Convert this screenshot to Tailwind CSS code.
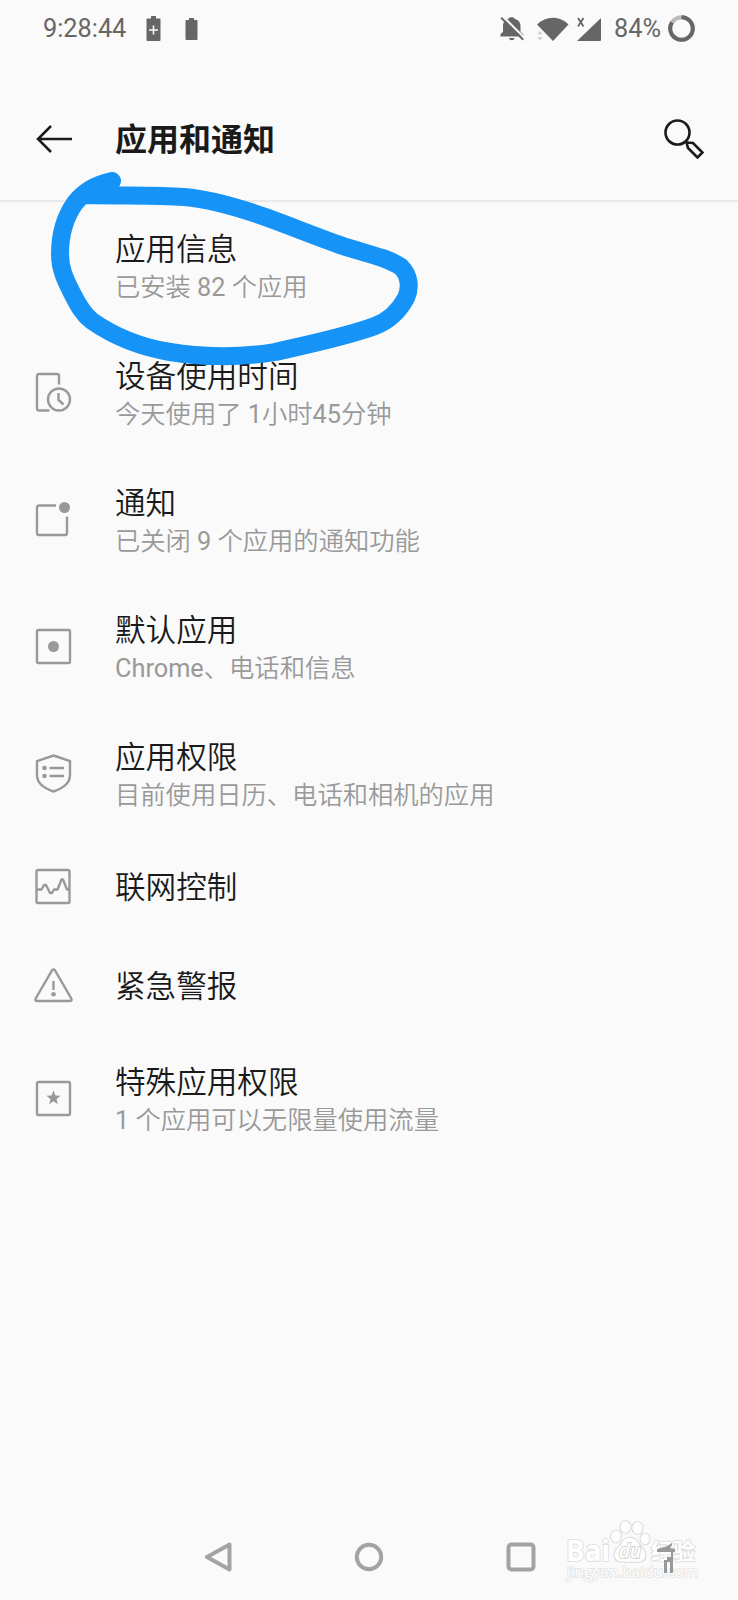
<!DOCTYPE html>
<html lang="zh-CN">
<head>
  <meta charset="UTF-8">
  <meta name="viewport" content="width=device-width, initial-scale=1.0">
  <title>应用和通知</title>
  <script src="https://cdn.jsdelivr.net/npm/@tailwindcss/browser@4"></script>
</head>
<body class="bg-[#fafafa]">
  <div class="relative flex h-[1600px] w-[738px] flex-col overflow-hidden bg-[#fafafa] font-[Roboto,'Noto_Sans_CJK_SC',sans-serif] text-[#1a1a1a]">

    <!-- Status bar -->
    <div class="flex h-14 shrink-0 items-center pl-[43px] pr-[43px] pt-px text-[25.300px] text-[#666]">
      <span class="pt-px leading-none">9:28:44</span>
      <svg class="ml-[20px] h-[26px] w-[15px]" viewBox="0 0 15 26">
        <path fill="#666" d="M5 0h5v2.500h3.500q1 0 1 1V24q0 1-1 1h-12q-1 0-1-1V3.500q0-1 1-1H5z"/>
        <path stroke="#fafafa" stroke-width="1.600" d="M7.500 9.500v9M3 14h9"/>
      </svg>
      <svg class="ml-6 h-[24px] w-[13px]" viewBox="0 0 13 24">
        <path fill="#666" d="M4 1h5v2h2.500q1 0 1 1v18q0 1-1 1h-10q-1 0-1-1V4q0-1 1-1H4z"/>
      </svg>
      <div class="ml-auto flex items-center">
        <svg class="h-[26px] w-6" viewBox="0 0 24 26">
          <path fill="#666" d="M.500 20.500v-2.500l2.500-2V10c0-4 2.500-6.500 5.500-7.300C9 .8 14 .8 14.500 2.700 18 3.500 20.500 6 20.500 10v6l3 2.500v2zM9 22h5.500c-.5 3-5 3-5.500 0z"/>
          <path stroke="#fafafa" stroke-width="2" d="M3 .500L25.500 23"/>
          <path stroke="#666" stroke-width="2" d="M1.200 1.800l22 22"/>
        </svg>
        <svg class="ml-[13px] h-[26px] w-8" viewBox="0 0 32 26">
          <path fill="#666" d="M0 8.500C9-.500 23-.500 31.500 8.500L16 25z"/>
          <path fill="#ccc" stroke="#fafafa" stroke-width=".6" d="M0 18.500l3-4 3 4zM0 21h6l-3 4z"/>
        </svg>
        <svg class="ml-2 h-[26px] w-6" viewBox="0 0 24 26">
          <path fill="#666" d="M24 2v22q0 1-1 1H0z"/>
          <path fill="none" stroke="#666" stroke-width="1.800" d="M1 2l5.500 8.500M6.500 2L1 10.500"/>
        </svg>
        <span class="ml-[13px] pt-px leading-none">84%</span>
        <svg class="ml-[7px] h-[28px] w-[27px]" viewBox="0 0 27 28">
          <circle cx="13.500" cy="13.500" r="11.300" fill="none" stroke="#bbb" stroke-width="4"/>
          <path fill="none" stroke="#666" stroke-width="4" d="M13.500 2.200A11.300 11.300 0 1 1 4 7.400"/>
        </svg>
      </div>
    </div>

    <!-- Title bar -->
    <header class="flex h-[146px] shrink-0 items-center border-b-2 border-[#e9e9e9] pl-[36px] pr-[34px] pt-[22px]">
      <svg class="h-[28px] w-[37px]" viewBox="0 0 37 28" fill="none" stroke="#1a1a1a" stroke-width="2.500">
        <path d="M36 14H2M15 1L2 14l13 13"/>
      </svg>
      <h1 class="ml-[42px] pt-[2px] text-[32px] font-bold leading-[40px]">应用和通知</h1>
      <svg class="ml-auto h-10 w-10" viewBox="0 0 40 40" fill="none" stroke="#1a1a1a" stroke-width="2.600">
        <circle cx="13.500" cy="13.500" r="12"/>
        <path d="M22.500 23.500l6.500.5 9.500 9.500-5 5L24 29z"/>
      </svg>
    </header>

    <!-- Settings list -->
    <ul class="grow font-[350]">
      <li class="flex h-[127px] pl-[33px]">
        <div class="w-10"></div>
        <div class="ml-[42px] pt-[28px]">
          <p class="text-[30.600px] leading-[40px]">应用信息</p>
          <p class="text-[25.300px] leading-[36px] text-[#999]">已安装 <span class="font-normal">82</span> 个应用</p>
        </div>
      </li>

      <li class="flex h-[127px] pl-[33px]">
        <svg class="mt-[43px] h-10 w-10" viewBox="0 0 40 40" fill="none" stroke="#999" stroke-width="2.400">
          <path d="M16.500 38.500H6q-2 0-2-2V4q0-2 2-2h18q2 0 2 2v8.500"/>
          <circle cx="26" cy="27.500" r="11"/>
          <path d="M25.500 21v7l5 4.500"/>
        </svg>
        <div class="ml-[42px] pt-[28px]">
          <p class="text-[30.600px] leading-[40px]">设备使用时间</p>
          <p class="text-[25.300px] leading-[36px] text-[#999]">今天使用了 <span class="font-normal">1</span>小时<span class="font-normal">45</span>分钟</p>
        </div>
      </li>

      <li class="flex h-[127px] pl-[33px]">
        <svg class="mt-[43px] h-10 w-10" viewBox="0 0 40 40" fill="none" stroke="#999" stroke-width="2.400">
          <path d="M23 6.500H6q-2 0-2 2V34q0 2 2 2h26q2 0 2-2V17.500"/>
          <circle cx="31.500" cy="8.500" r="5.500" fill="#999" stroke="none"/>
        </svg>
        <div class="ml-[42px] pt-[28px]">
          <p class="text-[30.600px] leading-[40px]">通知</p>
          <p class="text-[25.300px] leading-[36px] text-[#999]">已关闭 <span class="font-normal">9</span> 个应用的通知功能</p>
        </div>
      </li>

      <li class="flex h-[127px] pl-[33px]">
        <svg class="mt-[43px] h-10 w-10" viewBox="0 0 40 40" fill="none" stroke="#999" stroke-width="2.400">
          <rect x="4" y="4" width="33" height="33" rx="1.500"/>
          <circle cx="20.500" cy="20.500" r="5.500" fill="#999" stroke="none"/>
        </svg>
        <div class="ml-[42px] pt-[28px]">
          <p class="text-[30.600px] leading-[40px]">默认应用</p>
          <p class="text-[25.300px] leading-[36px] text-[#999]"><span class="font-normal">Chrome</span>、电话和信息</p>
        </div>
      </li>

      <li class="flex h-[127px] pl-[33px]">
        <svg class="mt-[43px] h-10 w-10" viewBox="0 0 40 40" fill="none" stroke="#999" stroke-width="2.400">
          <path d="M20.500 2.500L37 8v14c0 8-6 13-16.500 16.500C10 35 4 30 4 22V8z"/>
          <path stroke-width="2.600" d="M16.500 15H31M16.500 23H31"/>
          <circle cx="11.500" cy="15" r="2.300" fill="#999" stroke="none"/>
          <circle cx="11.500" cy="23" r="2.300" fill="#999" stroke="none"/>
        </svg>
        <div class="ml-[42px] pt-[28px]">
          <p class="text-[30.600px] leading-[40px]">应用权限</p>
          <p class="text-[25.300px] leading-[36px] text-[#999]">目前使用日历、电话和相机的应用</p>
        </div>
      </li>

      <li class="flex h-[99px] items-center pl-[33px]">
        <svg class="h-10 w-10" viewBox="0 0 40 40" fill="none" stroke="#999" stroke-width="2.400">
          <rect x="3.500" y="3" width="33" height="33" rx="1.500"/>
          <path stroke-linejoin="round" d="M4 22.500h4.500l2.500-4.500h2l4 8h2l2-3.500h3.500l4-10h1.500l4 10H36"/>
        </svg>
        <p class="ml-[42px] pt-[3px] text-[30.600px] leading-[40px]">联网控制</p>
      </li>

      <li class="flex h-[99px] items-center pl-[33px]">
        <svg class="h-10 w-10" viewBox="0 0 40 40" fill="none" stroke="#999" stroke-width="2.400">
          <path d="M19 4.500q1.500-2 3 0L38.300 32.500q1 2.500-1.500 2.500H4.200q-2.500 0-1.500-2.500z"/>
          <path d="M20.500 15v9"/>
          <circle cx="20.500" cy="28.300" r="2.300" fill="#999" stroke="none"/>
        </svg>
        <p class="ml-[42px] pt-[3px] text-[30.600px] leading-[40px]">紧急警报</p>
      </li>

      <li class="flex h-[127px] pl-[33px]">
        <svg class="mt-[43px] h-10 w-10" viewBox="0 0 40 40" fill="none" stroke="#999" stroke-width="2.400">
          <rect x="4" y="4" width="33" height="33" rx="1.500"/>
          <path fill="#999" stroke="none" d="M20.500 12.500l2 5 5 .3-4 3.400 1.400 5.100-4.400-3-4.400 3 1.400-5.100-4-3.400 5-.3z"/>
        </svg>
        <div class="ml-[42px] pt-[28px]">
          <p class="text-[30.600px] leading-[40px]">特殊应用权限</p>
          <p class="text-[25.300px] leading-[36px] text-[#999]"><span class="font-normal">1</span> 个应用可以无限量使用流量</p>
        </div>
      </li>
    </ul>

    <!-- Navigation bar -->
    <nav class="flex h-[86px] shrink-0 items-center pl-[204px]">
      <svg class="h-[30px] w-[30px]" viewBox="0 0 30 30" fill="none" stroke="#a3a3a3" stroke-width="4" stroke-linejoin="round">
        <path d="M3 15L25.500 2.500v25z"/>
      </svg>
      <svg class="ml-[120px] h-[30px] w-[30px]" viewBox="0 0 30 30" fill="none" stroke="#a3a3a3" stroke-width="4">
        <circle cx="15" cy="15" r="12.200"/>
      </svg>
      <svg class="ml-[122px] h-[30px] w-[30px]" viewBox="0 0 30 30" fill="none" stroke="#a3a3a3" stroke-width="4">
        <rect x="2.500" y="2.500" width="25" height="25" rx="3"/>
      </svg>
    </nav>

    <!-- Baidu watermark -->
    <svg class="absolute left-[550px] top-[1510px] h-[90px] w-[188px]" viewBox="0 0 188 90">
      <g fill="#fdfdfd" stroke="#dedede" stroke-width="1.200">
        <ellipse cx="66" cy="26.500" rx="5.500" ry="6.500"/>
        <ellipse cx="75.500" cy="17" rx="5.500" ry="6.500"/>
        <ellipse cx="87.500" cy="18" rx="5.500" ry="6.500"/>
        <ellipse cx="95" cy="29" rx="5" ry="6"/>
        <path d="M80 27c7 0 8 6 12 10 5 4 6 14-2 15-5 .5-15 .5-20 0-8-1-7-11-2-15 4-4 5-10 12-10z"/>
      </g>
      <g fill="#fff" stroke="#e0e0e0" stroke-width="1.800" paint-order="stroke" font-weight="700">
        <text x="16" y="51" font-size="28" textLength="44" lengthAdjust="spacingAndGlyphs" font-family="Open Sans, sans-serif">Bai</text>
        <text x="69" y="48" font-size="19" font-weight="600" font-style="italic" stroke="#d2d2d2" textLength="22" lengthAdjust="spacingAndGlyphs" font-family="Open Sans, sans-serif">du</text>
        <text x="101" y="49" font-size="22" font-family="Noto Sans CJK SC, sans-serif">经验</text>
        <text x="17" y="67" font-size="14" stroke-width="1.400" textLength="131" lengthAdjust="spacingAndGlyphs" font-weight="400" font-family="Open Sans, sans-serif">jingyan.baidu.com</text>
      </g>
      <!-- accessibility button showing through -->
      <path fill="#999" d="M107 39l8-2 7-4v2l-2 3 5 1v3h-2v21h-3V52h-3v11h-3V50h3v-3h4v-5h-14z"/>
    </svg>

    <!-- Hand-drawn marker around the first item -->
    <svg class="absolute left-0 top-0 h-[400px] w-[460px]" viewBox="0 0 460 400" fill="none" stroke="#1593f7" stroke-width="18" stroke-linecap="round" stroke-linejoin="round">
      <path d="M112 181C98 184 84 191 75 203C65 217 60 235 60 254C60 270 66 281 72 293C78 305 83 314 92 321C112 335 140 347 170 352C200 357 240 358 275 352C310 344 345 337 375 326C391 320 400 309 406 298C411 287 409 275 401 267C385 256 362 253 340 245C315 236 290 226 268 218C240 208 208 199 184 197C155 195 125 196 86 195L109 185"/>
    </svg>
  </div>
</body>
</html>
